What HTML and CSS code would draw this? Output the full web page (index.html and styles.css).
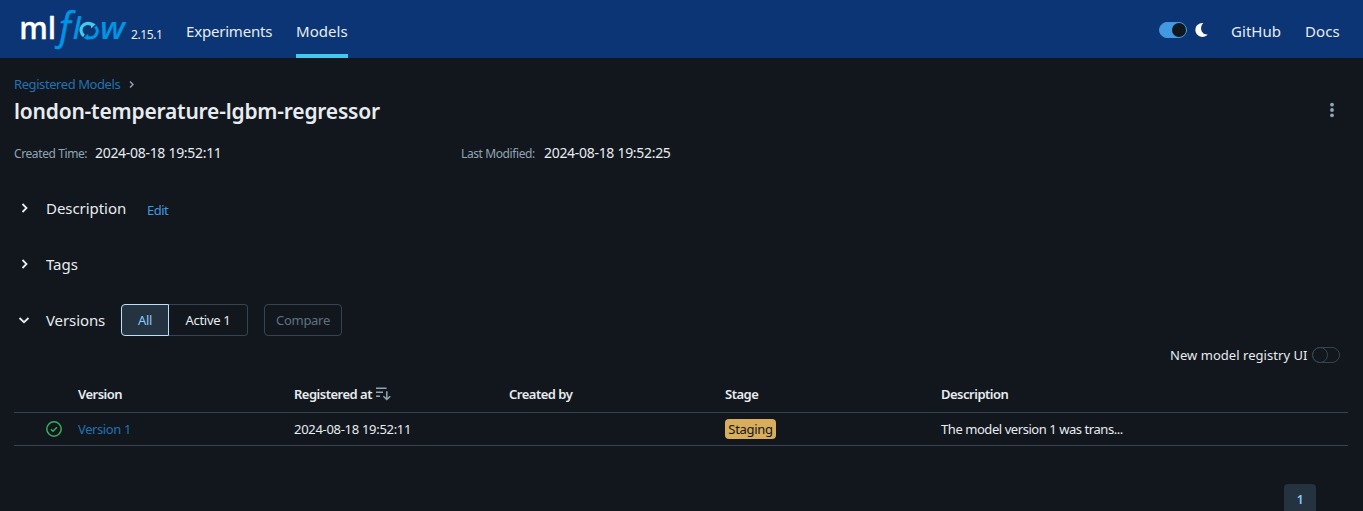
FILE: index.html
```html
<!DOCTYPE html>
<html lang="en">
<head>
<meta charset="utf-8">
<title>MLflow</title>
<link rel="stylesheet" href="styles.css">
</head>
<body>
<header class="topbar">
  <svg class="logo" width="106" height="42" viewBox="0 0 106 42">
    <text class="logo-ml" x="-1.800" y="32" textLength="37" lengthAdjust="spacingAndGlyphs">ml</text>
    <text class="logo-f" x="34" y="31.500" textLength="21" lengthAdjust="spacingAndGlyphs">ƒ</text>
    <text class="logo-flow" x="51.800" y="32" textLength="8" lengthAdjust="spacingAndGlyphs">l</text>
    <g fill="none" stroke-width="3.200">
      <path d="M63 28.800A6.600 6.600 0 0 1 70.500 17.600" stroke="#43c9ed"/>
      <path d="M74.300 19.500A6.600 6.600 0 0 1 67 30.200" stroke="#0194e2"/>
    </g>
    <path d="M69.700 15l5 2.200-4.600 4.200z" fill="#43c9ed"/>
    <path d="M67.600 33.200l-5-2.200 4.600-4.200z" fill="#0194e2"/>
    <text class="logo-flow" x="79" y="32" textLength="25" lengthAdjust="spacingAndGlyphs">w</text>
  </svg>
  <span class="release">2.15.1</span>
  <nav class="nav">
    <a class="tab">Experiments</a>
    <a class="tab active">Models</a>
  </nav>
  <div class="tools">
    <span class="switch on"><i></i></span>
    <svg class="moon" width="14" height="16" viewBox="0 0 14 16"><path d="M8.300 1A7 7 0 1 0 12.700 12.500C7 13.500 3.600 6 8.300 1z" fill="#fff"/></svg>
    <a class="tool github">GitHub</a>
    <a class="tool docs">Docs</a>
  </div>
</header>
<main class="page">
  <div class="crumbs"><a class="crumb">Registered Models</a>
    <svg width="6" height="8" viewBox="0 0 6 8"><path d="M1 1.500L4 4.500 1 7.500" fill="none" stroke="#92a4b3" stroke-width="1.400"/></svg>
  </div>
  <div class="titlebar">
    <h1>london-temperature-lgbm-regressor</h1>
    <svg width="4" height="16" viewBox="0 0 4 16" fill="#92a4b3"><circle cx="2" cy="2.700" r="1.900"/><circle cx="2" cy="8" r="1.900"/><circle cx="2" cy="13.300" r="1.900"/></svg>
  </div>
  <div class="meta">
    <div class="meta-item"><span class="label created">Created Time:</span><span class="stamp large">2024-08-18 19:52:11</span></div>
    <div class="meta-item"><span class="label modified">Last Modified:</span><span class="stamp large">2024-08-18 19:52:25</span></div>
  </div>
  <section class="section">
    <svg class="chev" width="12" height="12" viewBox="0 0 12 12"><path d="M4.500 2L8.500 6l-4 4"/></svg>
    <h2 class="h-desc">Description</h2><a class="edit">Edit</a>
  </section>
  <section class="section">
    <svg class="chev" width="12" height="12" viewBox="0 0 12 12"><path d="M4.500 2L8.500 6l-4 4"/></svg>
    <h2>Tags</h2>
  </section>
  <section class="section">
    <svg class="chev" width="12" height="12" viewBox="0 0 12 12"><path d="M1.500 4L6 8.200 10.500 4"/></svg>
    <h2 class="h-versions">Versions</h2>
    <div class="segments"><button class="btn all">All</button><button class="btn live">Active 1</button></div>
    <button class="btn compare">Compare</button>
  </section>
  <div class="registry"><span class="registry-text">New model registry UI</span><span class="switch"><i></i></span></div>
  <div class="table">
    <div class="row head">
      <div></div><div><span>Version</span></div>
      <div><span class="c-reg">Registered at</span>
        <svg class="sort" width="15" height="14" viewBox="0 0 15 14" fill="none" stroke="#92a4b3" stroke-width="1.500"><path d="M0 1.200h10.500M0 5.200h7M0 9.200h4M10.800 4.200v8M7.400 9.200l3.400 3.300 3.400-3.300"/></svg>
      </div>
      <div><span>Created by</span></div><div><span>Stage</span></div><div><span>Description</span></div>
    </div>
    <div class="row">
      <div class="status"><svg width="16" height="16" viewBox="0 0 16 16" fill="none" stroke="#3caa60" stroke-width="1.500"><circle cx="8" cy="8" r="7.200"/><path d="M4.900 8.200l2.100 2.100 4-4"/></svg></div>
      <div><a class="version-link">Version 1</a></div>
      <div><span class="stamp">2024-08-18 19:52:11</span></div>
      <div></div>
      <div><span class="tag">Staging</span></div>
      <div><span class="summary">The model version 1 was trans...</span></div>
    </div>
  </div>
  <div class="pager"><span class="page-number">1</span></div>
</main>
</body>
</html>
```

FILE: styles.css
```css
* { box-sizing: border-box; }
html, body { height: 100%; }
body {
  margin: 0;
  overflow: hidden;
  background: #11171d;
  color: #e8ecf0;
  font: 13px/20px "Noto Sans", "Open Sans", sans-serif;
  letter-spacing: -.3px;
  white-space: nowrap;
}
h1, h2 { margin: 0; }
svg { display: block; flex: none; }
.topbar { display: flex; height: 58px; padding-left: 21px; background: #0b3574; }
.logo { margin-top: 7px; overflow: visible; }
.logo text { letter-spacing: 0; }
.logo-ml { font: 600 31px "Open Sans", sans-serif; fill: #fff; stroke: #fff; stroke-width: .3; }
.logo-f { font: italic 400 41px "Open Sans", sans-serif; fill: #0194e2; stroke: #0194e2; stroke-width: .5; }
.logo-flow { font: italic 600 31px "Open Sans", sans-serif; fill: #0194e2; }
.release { width: 32px; margin: 25px 0 0 4px; font-size: 12px; letter-spacing: -.4px; }
.nav { display: flex; gap: 24px; margin-left: 23px; }
.tab { height: 58px; padding-top: 21px; font-size: 15px; letter-spacing: -.2px; width: 86px; }
.tab.active { width: 52px; border-bottom: 4px solid #43c9ed; letter-spacing: .05px; }
.tools { display: flex; margin-left: auto; padding-right: 23px; }
.switch { display: block; width: 28px; height: 16px; border: 1px solid #37444f; border-radius: 8px; }
.switch i { display: block; width: 16px; height: 16px; margin: -1px; border: 1px solid #37444f; border-radius: 50%; }
.switch.on { margin-top: 22px; border-color: #4299e0; background: #4299e0; }
.switch.on i { width: 14px; height: 14px; margin: 0 0 0 12px; border: 0; background: #11171d; }
.moon { margin: 22px 0 0 8px; }
.tool { margin-top: 21px; font-size: 15px; }
.github { width: 50px; margin-left: 22px; letter-spacing: .05px; }
.docs { width: 35px; margin-left: 24px; letter-spacing: .1px; }
.page { padding: 16px 15px 0 14px; }
.crumbs { display: flex; align-items: center; gap: 9px; height: 20px; color: #2272b4; }
.crumb { width: 106px; letter-spacing: -.42px; }
.titlebar { display: flex; align-items: center; justify-content: space-between; height: 32px; padding-right: 14px; }
h1 { padding-top: 2px; font-size: 21px; font-weight: 600; line-height: 30px; letter-spacing: -.2px; }
.meta { display: grid; grid-template-columns: 447px 447px; margin-top: 17px; }
.meta-item { display: flex; height: 20px; }
.label { padding-top: 1px; margin-right: 8px; color: #92a4b3; font-size: 12px; line-height: 19px; letter-spacing: -.4px; }
.created { width: 73px; }
.modified { width: 75px; }
.stamp { letter-spacing: -.3px; }
.stamp.large { font-size: 14px; letter-spacing: -.3px; line-height: 19px; }
.section { display: flex; align-items: center; height: 32px; margin-top: 24px; padding-left: 4px; }
.meta + .section { margin-top: 29px; }
.chev { margin-right: 16px; fill: none; stroke: #e8ecf0; stroke-width: 1.8; }
h2 { font-size: 15px; font-weight: 400; line-height: 22px; letter-spacing: -.05px; }
.h-desc { width: 81px; }
.h-versions { width: 59px; letter-spacing: -.1px; }
.edit { margin: 4px 0 0 20px; color: #4299e0; letter-spacing: -.5px; }
.segments { display: flex; margin-left: 16px; }
.btn { height: 32px; padding: 0; border: 1px solid #37444f; background: none; color: #e8ecf0; font: inherit; letter-spacing: -.3px; }
.all { width: 48px; border-color: #bae1fc; border-radius: 4px 0 0 4px; background: #24333f; color: #8acaff; }
.live { width: 79px; border-left: 0; border-radius: 0 4px 4px 0; }
.compare { width: 78px; margin-left: 16px; border-radius: 4px; color: #5f7281; }
.registry { display: flex; align-items: center; justify-content: flex-end; height: 20px; margin-top: 9px; padding-right: 8px; }
.registry-text { width: 138px; margin-right: 4px; letter-spacing: .04px; }
.table { margin-top: 12px; }
.row { display: grid; grid-template-columns: 64px 216px 215px 216px 216px 1fr; align-items: center; height: 33px; border-bottom: 1px solid #37444f; }
.row > div { display: flex; align-items: center; }
.row.head { height: 36px; padding-bottom: 2px; font-weight: 600; letter-spacing: -.5px; }
.sort { margin-left: 5px; }
.c-reg { width: 77px; }
.status { padding-left: 32px; }
.version-link { color: #2272b4; letter-spacing: -.4px; }
.summary { letter-spacing: -.44px; }
.tag { width: 51px; border-radius: 4px; background: #d8ad5b; color: #11171d; text-align: center; }
.pager { display: flex; justify-content: flex-end; margin-top: 38px; padding-right: 32px; }
.page-number { width: 32px; height: 32px; border-radius: 4px; background: #24333f; color: #8acaff; font-size: 12px; font-weight: 600; line-height: 32px; text-align: center; }
```
